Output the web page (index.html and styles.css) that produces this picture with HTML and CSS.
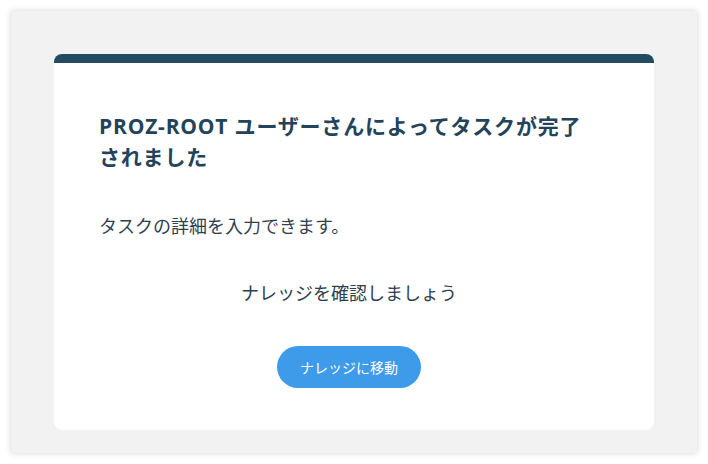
FILE: index.html
```html
<!DOCTYPE html>
<html lang="ja">
<head>
    <meta charset="UTF-8">
    <title>タスク完了</title>
    <link rel="stylesheet" href="styles.css">
</head>
<body>

<div class="panel">
    <div class="card">
        <h2 class="title">PROZ-ROOT ユーザーさんによってタスクが完了されました</h2>
        <p class="lead">タスクの詳細を入力できます。</p>
        <p class="hint">ナレッジを確認しましょう</p>
        <div class="actions">
            <button class="btn">ナレッジに移動</button>
        </div>
    </div>
</div>

</body>
</html>
```

FILE: styles.css
```css
/* ベース */
body {
    margin: 0;
    padding: 11px;
    background-color: #fff;
    font-family: "Open Sans", "Noto Sans CJK JP", sans-serif;
    color: #2f3f4f;
}
.panel {
    background-color: #f2f2f2;
    padding: 43px 43px 23px;
    box-shadow: 0 0 6px rgba(0, 0, 0, 0.18);
}
.card {
    background-color: #fff;
    border-top: 9px solid #234a63;
    border-radius: 8px;
    padding: 48px 55px 42px 45px;
}
.title {
    margin: 0;
    font-size: 21px;
    line-height: 31px;
    font-weight: bold;
    letter-spacing: 0.8px;
    color: #23435a;
}
.lead {
    margin: 40px 0 0;
    font-size: 18px;
    line-height: 26px;
}
.hint {
    margin: 41px 0 0;
    font-size: 18px;
    line-height: 26px;
    text-align: center;
}
.actions {
    margin-top: 40px;
    text-align: center;
}
.btn {
    width: 144px;
    height: 42px;
    border: none;
    border-radius: 21px;
    background-color: #3d9be9;
    color: #fff;
    font-family: inherit;
    font-size: 14px;
    cursor: pointer;
}
```
